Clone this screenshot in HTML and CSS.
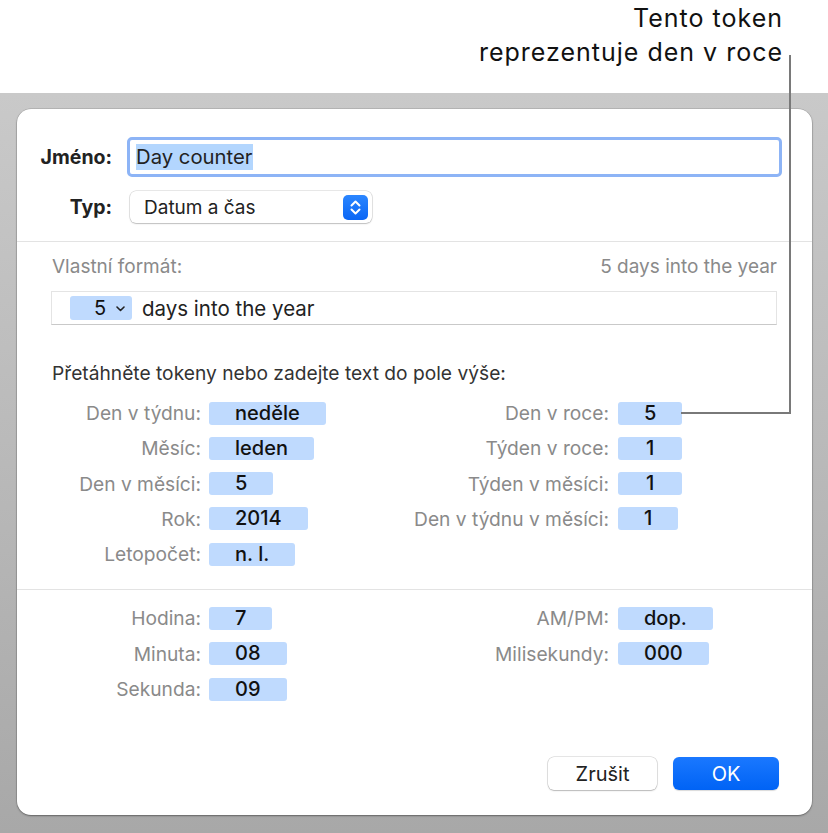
FILE: index.html
```html
<!DOCTYPE html>
<html lang="cs">
<head>
<meta charset="utf-8">
<title>Vlastní formát</title>
<link rel="stylesheet" href="styles.css">
</head>
<body>
<div class="page">
  <header class="callout-area">
    <p class="callout">Tento token<br>reprezentuje den v roce</p>
  </header>
  <div class="backdrop">
    <section class="dialog">
      <div class="form-row name-row">
        <span class="form-label">Jméno:</span>
        <div class="text-field"><span class="selected">Day counter</span></div>
      </div>
      <div class="form-row type-row">
        <span class="form-label">Typ:</span>
        <div class="popup">
          <span class="popup-text">Datum a čas</span>
          <span class="stepper">
            <svg width="25" height="25" viewBox="0 0 25 25"><path d="M8.5 10.5 L12.5 6.5 L16.5 10.5 M8.5 14.5 L12.5 18.5 L16.5 14.5" fill="none" stroke="#fff" stroke-width="2" stroke-linecap="round" stroke-linejoin="round"/></svg>
          </span>
        </div>
      </div>
      <div class="sep sep-top"></div>
      <div class="format-head">
        <span>Vlastní formát:</span>
        <span>5 days into the year</span>
      </div>
      <div class="format-field">
        <span class="token token-menu">5<svg class="chev" width="9" height="6" viewBox="0 0 9 6"><path d="M1 1 L4.5 4.5 L8 1" fill="none" stroke="#222" stroke-width="1.6" stroke-linecap="round" stroke-linejoin="round"/></svg></span>
        <span class="format-text">days into the year</span>
      </div>
      <p class="hint">Přetáhněte tokeny nebo zadejte text do pole výše:</p>
      <div class="token-grid date-grid">
        <span class="tk-label">Den v týdnu:</span><span class="token">neděle</span>
        <span class="tk-label">Den v roce:</span><span class="token">5</span>
        <span class="tk-label">Měsíc:</span><span class="token">leden</span>
        <span class="tk-label">Týden v roce:</span><span class="token wide1">1</span>
        <span class="tk-label">Den v měsíci:</span><span class="token">5</span>
        <span class="tk-label">Týden v měsíci:</span><span class="token wide1">1</span>
        <span class="tk-label">Rok:</span><span class="token">2014</span>
        <span class="tk-label">Den v týdnu v měsíci:</span><span class="token">1</span>
        <span class="tk-label">Letopočet:</span><span class="token">n. l.</span>
        <span></span><span></span>
      </div>
      <div class="sep sep-mid"></div>
      <div class="token-grid time-grid">
        <span class="tk-label">Hodina:</span><span class="token">7</span>
        <span class="tk-label">AM/PM:</span><span class="token">dop.</span>
        <span class="tk-label">Minuta:</span><span class="token">08</span>
        <span class="tk-label">Milisekundy:</span><span class="token">000</span>
        <span class="tk-label">Sekunda:</span><span class="token">09</span>
        <span></span><span></span>
      </div>
      <div class="buttons">
        <button class="btn btn-cancel" type="button">Zrušit</button>
        <button class="btn btn-ok" type="button">OK</button>
      </div>
    </section>
  </div>
  <div class="leader"></div>
</div>
</body>
</html>
```
FILE: styles.css
```css
* { box-sizing: border-box; }
html, body { margin: 0; padding: 0; }
body {
  width: 828px;
  height: 833px;
  overflow: hidden;
  background: #fff;
  font-family: Inter, "Liberation Sans", sans-serif;
  color: #222;
}
.page { position: relative; width: 828px; height: 833px; }

.callout-area {
  height: 93px;
  padding: 1px 45px 0 0;
  display: flex;
  justify-content: flex-end;
}
.callout {
  margin: 0;
  font-size: 25px;
  line-height: 34px;
  text-align: right;
  color: #111;
  letter-spacing: 1px;
}

.backdrop {
  height: 740px;
  padding: 16px 0 0 17px;
  background: linear-gradient(180deg, #c9c9c9 0%, #b9b9b9 50%, #a8a8a8 100%);
}
.dialog {
  width: 795px;
  height: 706px;
  background: #fff;
  border-radius: 14px;
  box-shadow: 0 0 0 0.5px rgba(0,0,0,0.18), 0 1px 2px rgba(0,0,0,0.35);
  display: flex;
  flex-direction: column;
}

.form-row { display: flex; align-items: center; }
.form-label {
  width: 95px;
  text-align: right;
  font-weight: 700;
  font-size: 19.5px;
  color: #222;
}
.name-row { margin-top: 28px; height: 40px; }
.text-field {
  margin-left: 15px;
  width: 655px;
  height: 40px;
  border: 3px solid #8db4f6;
  border-radius: 5px;
  display: flex;
  align-items: center;
  padding-left: 6px;
}
.selected {
  background: #b3d6fe;
  font-size: 20.3px;
  line-height: 26px;
  color: #222;
  padding-right: 1px;
}
.type-row { margin-top: 14px; height: 32px; }
.popup {
  margin-left: 18px;
  width: 242px;
  height: 32px;
  border-radius: 6px;
  background: #fff;
  box-shadow: 0 0 0 0.5px rgba(0,0,0,0.18), 0 1px 1.5px rgba(0,0,0,0.18);
  display: flex;
  align-items: center;
  justify-content: space-between;
  padding: 0 4px 0 14px;
}
.popup-text { font-size: 19px; color: #222; }
.stepper {
  width: 25px;
  height: 25px;
  border-radius: 5px;
  background: linear-gradient(180deg, #2b86ff, #0a66f5);
  display: flex;
}

.sep { height: 1px; background: #e3e3e3; }
.sep-top { margin-top: 18px; }
.sep-mid { margin-top: 23.5px; }

.format-head {
  margin-top: 12px;
  height: 24px;
  padding: 0 35px;
  display: flex;
  justify-content: space-between;
  align-items: center;
  font-size: 19px;
  color: #8a8a8a;
}
.format-field {
  margin: 13px 35px 0 34px;
  height: 34px;
  border: 1px solid #e4e4e4;
  border-bottom-color: #c9c9c9;
  display: flex;
  align-items: center;
  padding-left: 18px;
}
.format-text { margin-left: 10px; font-size: 20.5px; color: #222; }

.token {
  justify-self: start;
  height: 23px;
  padding: 0 26px;
  background: #bfdafe;
  border-radius: 3px;
  font-size: 20px;
  font-weight: 500;
  line-height: 23px;
  color: #111;
  text-align: center;
}
.token.wide1 { padding: 0 28px; }
.token-menu {
  height: 24px;
  width: 62px;
  padding: 0 7px 0 24px;
  display: flex;
  align-items: center;
  justify-content: space-between;
  font-weight: 400;
}
.chev { margin-top: 1px; }

.hint {
  margin: 36px 0 0 35px;
  line-height: 24px;
  font-size: 19.2px;
  color: #333;
}

.token-grid {
  display: grid;
  grid-template-columns: 184px 160px 232px 1fr;
  column-gap: 8px;
  grid-auto-rows: 23px;
  align-items: center;
}
.date-grid { margin-top: 16.5px; row-gap: 12.25px; }
.time-grid { margin-top: 16.5px; row-gap: 12.5px; }
.token-grid .token:nth-child(4n) { margin-left: 1px; }
.tk-label {
  text-align: right;
  font-size: 19.2px;
  color: #8a8a8a;
  white-space: nowrap;
}

.buttons {
  margin-top: 56.5px;
  padding-right: 33px;
  display: flex;
  justify-content: flex-end;
  gap: 16px;
}
.btn {
  height: 33px;
  border: none;
  border-radius: 6px;
  font-family: inherit;
  font-size: 20px;
}
.btn-cancel {
  width: 109px;
  background: #fff;
  color: #222;
  box-shadow: 0 0 0 0.5px rgba(0,0,0,0.2), 0 1px 1.5px rgba(0,0,0,0.2);
}
.btn-ok {
  width: 106px;
  background: linear-gradient(180deg, #1a78ff, #0063f5);
  color: #fff;
  box-shadow: 0 1px 1px rgba(0,0,0,0.15);
}

.leader {
  position: absolute;
  left: 681px;
  top: 55px;
  width: 110px;
  height: 359px;
  border-right: 2px solid #797979;
  border-bottom: 2px solid #797979;
  pointer-events: none;
}
```
